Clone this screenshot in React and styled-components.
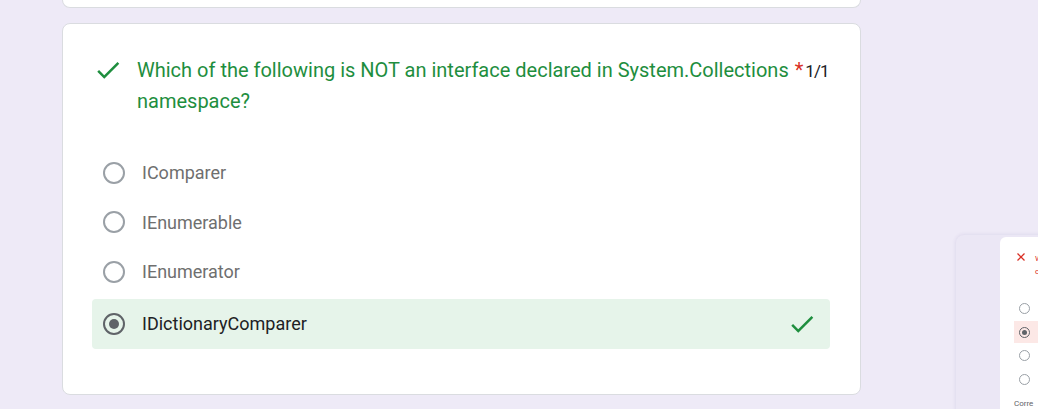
import React from 'react'
import styled, { createGlobalStyle } from 'styled-components'

const Global = createGlobalStyle`
  html, body {
    margin: 0;
    padding: 0;
    background: #eeeaf7;
    overflow: hidden;
    font-family: Roboto, 'Liberation Sans', sans-serif;
  }
`

const Page = styled.div`
  position: relative;
  width: 1038px;
  height: 409px;
  overflow: hidden;
  padding-left: 62px;
  box-sizing: border-box;
`

const PrevCard = styled.div`
  width: 799px;
  height: 8px;
  box-sizing: border-box;
  background: #fff;
  border: 1px solid #dadce0;
  border-top: none;
  border-radius: 0 0 8px 8px;
`

const Card = styled.div`
  width: 799px;
  margin-top: 15px;
  box-sizing: border-box;
  background: #fff;
  border: 1px solid #dadce0;
  border-radius: 8px;
  padding: 31px 30px 45px 29px;
`

const Header = styled.div`
  display: flex;
  align-items: flex-start;
  padding-left: 1px;
  margin-bottom: 32px;
`

const HeadIcon = styled.div`
  width: 44px;
  height: 30px;
  display: flex;
  align-items: center;
  flex: none;
`

const TitleBlock = styled.div`
  flex: 1;
  font-size: 20px;
  line-height: 30px;
  color: #1e8e3e;
`

const TitleLine = styled.div`
  display: flex;
  align-items: baseline;
  white-space: nowrap;
`

const Star = styled.span`
  color: #d93025;
  margin-left: 6px;
`

const Points = styled.span`
  color: #202124;
  margin-left: 2px;
  font-size: 17px;
  letter-spacing: -1px;
`

const Options = styled.div`
  display: flex;
  flex-direction: column;
`

const Row = styled.div`
  display: flex;
  align-items: center;
  height: ${p => (p.$correct ? '50px' : '49.5px')};
  padding: 0 13px 0 11px;
  border-radius: 4px;
  background: ${p => (p.$correct ? '#e6f4ea' : 'transparent')};
  margin-top: ${p => (p.$correct ? '2px' : '0')};
`

const Radio = styled.span`
  width: 22px;
  height: 22px;
  box-sizing: border-box;
  border-radius: 50%;
  border: 2px solid ${p => (p.$on ? '#5f6368' : '#9aa0a6')};
  display: flex;
  align-items: center;
  justify-content: center;
  flex: none;
  &::after {
    content: '';
    display: ${p => (p.$on ? 'block' : 'none')};
    width: 10px;
    height: 10px;
    border-radius: 50%;
    background: #5f6368;
  }
`

const Label = styled.span`
  flex: 1;
  margin-left: 17px;
  font-size: 18px;
  color: ${p => (p.$on ? '#202124' : '#6f6f6f')};
`

/* floating preview on the right */
const Preview = styled.div`
  position: absolute;
  left: 956px;
  top: 235px;
  width: 120px;
  height: 200px;
  background: #ebe7f5;
  border-radius: 8px 0 0 0;
  box-shadow: 0 0 4px rgba(60, 40, 120, 0.12);
  padding: 2px 0 0 44px;
  box-sizing: border-box;
`

const Mini = styled.div`
  background: #fff;
  border-radius: 6px 0 0 0;
  height: 100%;
  padding: 15px 0 0 16px;
  box-sizing: border-box;
  font-size: 8px;
`

const MiniHead = styled.div`
  display: flex;
  color: #d93025;
  line-height: 13px;
  gap: 9px;
`

const MiniOpts = styled.div`
  margin-top: 19px;
  margin-left: -2px;
  display: flex;
  flex-direction: column;
  gap: 1px;
`

const MiniRow = styled.div`
  height: 22.7px;
  display: flex;
  align-items: center;
  padding-left: 5px;
  background: ${p => (p.$wrong ? '#fce8e6' : 'transparent')};
`

const MiniRadio = styled.span`
  width: 11px;
  height: 11px;
  box-sizing: border-box;
  border-radius: 50%;
  border: 1px solid ${p => (p.$on ? '#5f6368' : '#9aa0a6')};
  display: flex;
  align-items: center;
  justify-content: center;
  &::after {
    content: '';
    display: ${p => (p.$on ? 'block' : 'none')};
    width: 5px;
    height: 5px;
    border-radius: 50%;
    background: #5f6368;
  }
`

const MiniFoot = styled.div`
  margin-top: 8px;
  margin-left: -2px;
  color: #5f6368;
  font-size: 8px;
`

const Check = ({ size = 30 }) => (
  <svg width={size} height={size} viewBox="0 0 24 24">
    <path d="M9 16.17L4.83 12l-1.42 1.41L9 19 21 7l-1.41-1.41z" fill="#1e8e3e" />
  </svg>
)

const options = ['IComparer', 'IEnumerable', 'IEnumerator', 'IDictionaryComparer']

const App = () => {
  return (
    <Page>
      <Global />
      <PrevCard />
      <Card>
        <Header>
          <HeadIcon>
            <Check />
          </HeadIcon>
          <TitleBlock>
            <TitleLine>
              Which of the following is NOT an interface declared in System.Collections
              <Star>*</Star>
              <Points>1/1</Points>
            </TitleLine>
            <div>namespace?</div>
          </TitleBlock>
        </Header>
        <Options>
          {options.map((o, i) => {
            const on = i === 3
            return (
              <Row key={o} $correct={on}>
                <Radio $on={on} />
                <Label $on={on}>{o}</Label>
                {on && <Check size={30} />}
              </Row>
            )
          })}
        </Options>
      </Card>
      <Preview>
        <Mini>
          <MiniHead>
            <svg width="10" height="10" viewBox="0 0 10 10">
              <path d="M1.5 1.5l7 7M8.5 1.5l-7 7" stroke="#d93025" strokeWidth="1.3" />
            </svg>
            <span>W<br />c</span>
          </MiniHead>
          <MiniOpts>
            <MiniRow><MiniRadio /></MiniRow>
            <MiniRow $wrong><MiniRadio $on /></MiniRow>
            <MiniRow><MiniRadio /></MiniRow>
            <MiniRow><MiniRadio /></MiniRow>
          </MiniOpts>
          <MiniFoot>Corre</MiniFoot>
        </Mini>
      </Preview>
    </Page>
  )
}

export default App
